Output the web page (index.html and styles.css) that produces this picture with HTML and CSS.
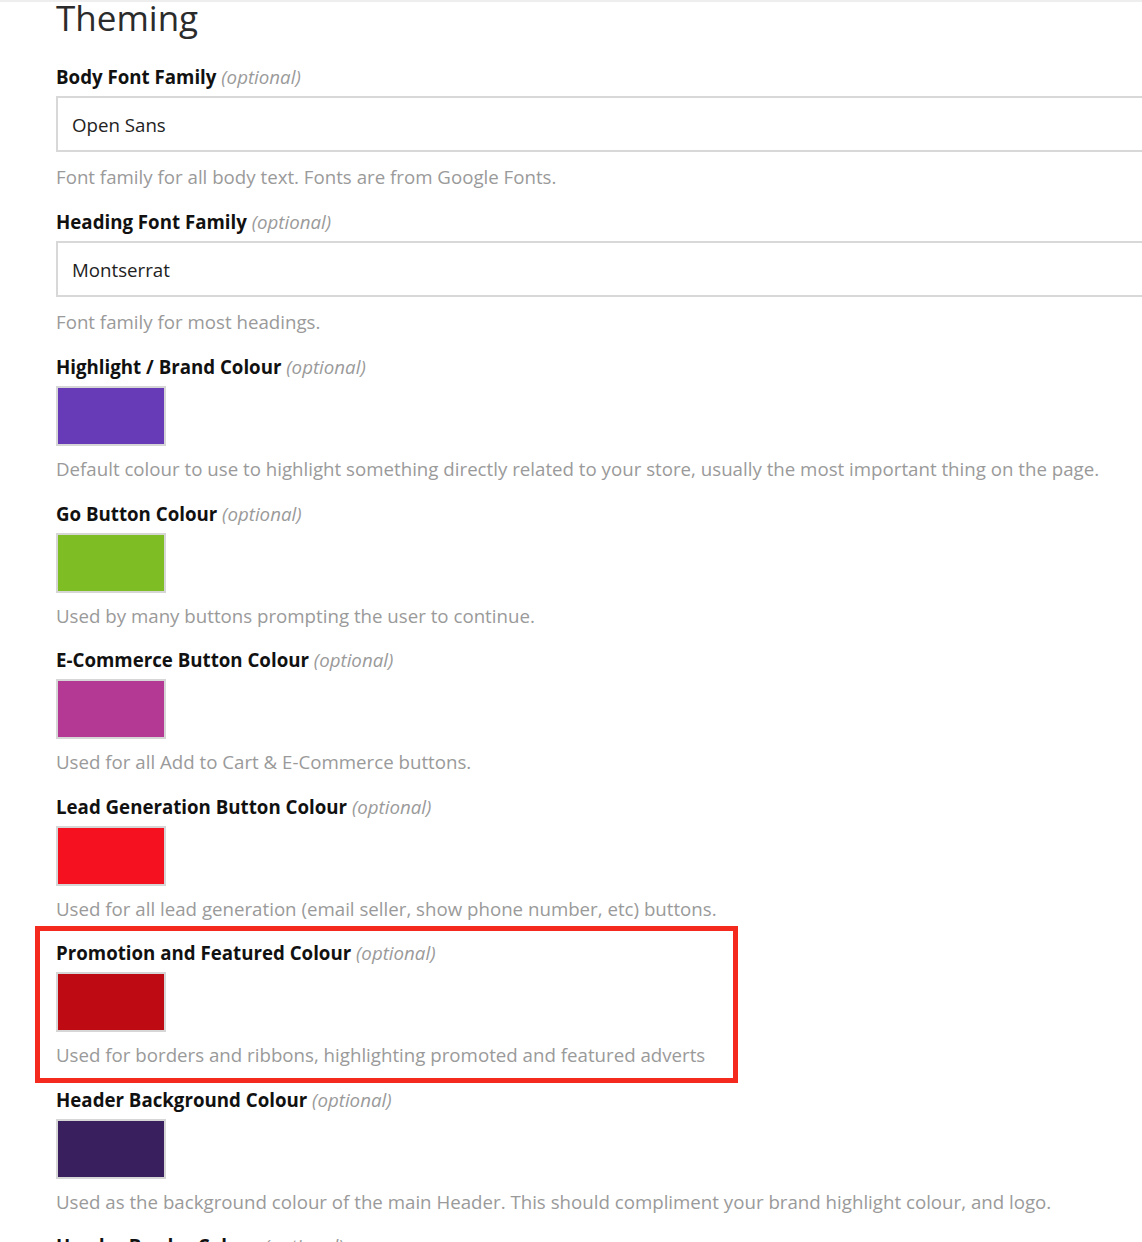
FILE: index.html
```html
<!DOCTYPE html>
<html lang="en">
<head>
  <meta charset="UTF-8" />
  <title>Theming</title>
  <link rel="stylesheet" href="styles.css">
</head>
<body>
  <div class="topline"></div>
  <div class="settings">
    <h2 class="section-title">Theming</h2>

    <div class="field field-text">
      <label class="field-label">Body Font Family <em>(optional)</em></label>
      <input class="text-input" type="text" value="Open Sans">
      <p class="help">Font family for all body text. Fonts are from Google Fonts.</p>
    </div>

    <div class="field field-text">
      <label class="field-label">Heading Font Family <em>(optional)</em></label>
      <input class="text-input" type="text" value="Montserrat">
      <p class="help">Font family for most headings.</p>
    </div>

    <div class="field">
      <label class="field-label">Highlight / Brand Colour <em>(optional)</em></label>
      <div class="swatch swatch-brand"></div>
      <p class="help">Default colour to use to highlight something directly related to your store, usually the most important thing on the page.</p>
    </div>

    <div class="field">
      <label class="field-label">Go Button Colour <em>(optional)</em></label>
      <div class="swatch swatch-go"></div>
      <p class="help">Used by many buttons prompting the user to continue.</p>
    </div>

    <div class="field">
      <label class="field-label">E-Commerce Button Colour <em>(optional)</em></label>
      <div class="swatch swatch-ecom"></div>
      <p class="help">Used for all Add to Cart &amp; E-Commerce buttons.</p>
    </div>

    <div class="field">
      <label class="field-label">Lead Generation Button Colour <em>(optional)</em></label>
      <div class="swatch swatch-lead"></div>
      <p class="help">Used for all lead generation (email seller, show phone number, etc) buttons.</p>
    </div>

    <!-- highlighted field -->
    <div class="field field-marked">
      <label class="field-label">Promotion and Featured Colour <em>(optional)</em></label>
      <div class="swatch swatch-promo"></div>
      <p class="help">Used for borders and ribbons, highlighting promoted and featured adverts</p>
    </div>

    <div class="field">
      <label class="field-label">Header Background Colour <em>(optional)</em></label>
      <div class="swatch swatch-header"></div>
      <p class="help">Used as the background colour of the main Header. This should compliment your brand highlight colour, and logo.</p>
    </div>

    <div class="field">
      <label class="field-label">Header Border Colour <em>(optional)</em></label>
      <div class="swatch swatch-border"></div>
    </div>
  </div>
</body>
</html>
```

FILE: styles.css
```css
/* Reset */
* {
  margin: 0;
  padding: 0;
  box-sizing: border-box;
}

html, body {
  height: 100%;
  overflow: hidden;
  background: #fff;
  font-family: "Open Sans", sans-serif;
}

.topline {
  height: 2px;
  background: #eeeeee;
}

.settings {
  padding-left: 56px;
  width: 1300px;
}

.section-title {
  font-size: 35px;
  line-height: 36px;
  font-weight: 400;
  color: #2b2b2b;
  margin-top: -2px;
  margin-bottom: 29px;
}

.field {
  position: relative;
  margin-bottom: 20.5px;
}

.field-text {
  margin-bottom: 21px;
}

.field-label {
  display: block;
  font-size: 18.7px;
  line-height: 24px;
  font-weight: 700;
  color: #111;
  margin-bottom: 7px;
}

.field-label em {
  font-weight: 400;
  color: #9a9a9a;
}

.text-input {
  display: block;
  width: 1200px;
  height: 56px;
  border: 2px solid #d8d8d8;
  padding: 0 14px;
  font-family: "Open Sans", sans-serif;
  font-size: 18.7px;
  color: #222;
  margin-bottom: 13px;
  outline: none;
}

.swatch {
  width: 110px;
  height: 60px;
  border: 2px solid #d6d6d6;
  margin-bottom: 11px;
}

.swatch-brand  { background: #673ab7; }
.swatch-go     { background: #7fbd25; }
.swatch-ecom   { background: #b43995; }
.swatch-lead   { background: #f51120; }
.swatch-promo  { background: #bd0a13; }
.swatch-header { background: #3a1f5e; }
.swatch-border { background: #3a1f5e; }

.help {
  font-size: 18.7px;
  line-height: 24px;
  color: #9a9a9a;
}

/* red annotation frame */
.field-marked::after {
  content: "";
  box-sizing: border-box;
  position: absolute;
  top: -15px;
  bottom: -15.5px;
  left: -21px;
  width: 703px;
  border: 5px solid #f42a1e;
}
```
